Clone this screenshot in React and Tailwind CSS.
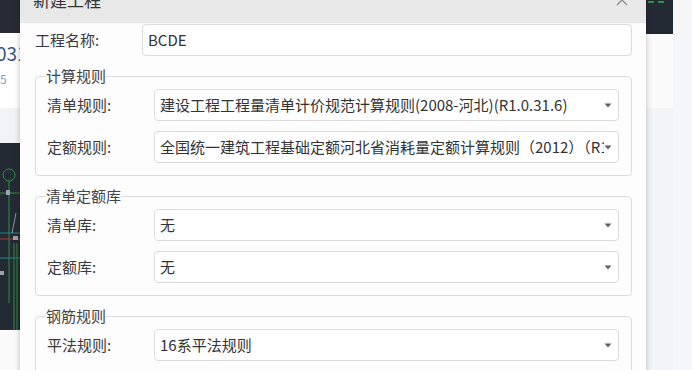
import React from 'react';

const font = { fontFamily: '"Noto Sans CJK SC", "Noto Sans", sans-serif' };

// Small filled caret used by the select boxes
const Caret = () => (
  <svg width="8" height="5" viewBox="0 0 8 5" className="shrink-0">
    <path d="M0.5 0.5 L7.5 0.5 L4 4.5 Z" fill="#606266" />
  </svg>
);

const SelectBox = ({ value }) => (
  <div className="flex-1 min-w-0 h-[32px] flex items-center border border-[#dcdcdc] rounded-[4px] bg-white pl-[5px] pr-[6px]">
    <div className="flex-1 min-w-0 overflow-hidden whitespace-nowrap text-[15px] leading-[20px] text-[#333]">
      {value}
    </div>
    <Caret />
  </div>
);

const Row = ({ label, value }) => (
  <div className="flex items-center min-w-0">
    <div className="w-[107px] shrink-0 text-[15px] leading-[20px] text-[#3a3a3a]">{label}</div>
    <SelectBox value={value} />
  </div>
);

const Group = ({ title, rows }) => (
  <fieldset className="mt-[11px] min-w-0 border border-[#dcdcdc] rounded-[4px] pl-[11px] pr-[12px] pt-[4px] pb-[12px]">
    <legend className="px-0 ml-[-1px] text-[15px] leading-[18px] text-[#444]">{title}</legend>
    <div className="flex flex-col gap-[10px] min-w-0">
      {rows.map((r) => (
        <Row key={r.label} label={r.label} value={r.value} />
      ))}
    </div>
  </fieldset>
);

// Dark drawing canvas peeking out on the left side
const CanvasStrip = () => (
  <svg width="20" height="187" viewBox="0 0 20 187" className="block">
    <rect width="20" height="187" fill="#242a33" />
    <circle cx="9" cy="32" r="6" fill="none" stroke="#2f8f3f" strokeWidth="1" />
    <line x1="9" y1="38" x2="9" y2="160" stroke="#2f8f3f" strokeWidth="1" />
    <line x1="0" y1="50" x2="20" y2="50" stroke="#2f8f3f" strokeWidth="1" />
    <rect x="6" y="47" width="4" height="5" fill="#9aa3ad" />
    <line x1="0" y1="90" x2="20" y2="90" stroke="#1f8a8a" strokeWidth="1" />
    <line x1="0" y1="96" x2="20" y2="96" stroke="#a33a3a" strokeWidth="1" />
    <line x1="16" y1="70" x2="12" y2="90" stroke="#8a93a0" strokeWidth="1" />
    <rect x="13" y="93" width="5" height="4" fill="#9aa3ad" />
    <line x1="14" y1="100" x2="14" y2="187" stroke="#2f8f3f" strokeWidth="1" />
    <line x1="17" y1="100" x2="17" y2="187" stroke="#2f8f3f" strokeWidth="1" />
    <line x1="0" y1="115" x2="20" y2="115" stroke="#1f8a8a" strokeWidth="1" />
    <rect x="0" y="128" width="4" height="4" fill="#9aa3ad" />
  </svg>
);

export default function App() {
  return (
    <div className="relative w-[692px] h-[370px] overflow-hidden bg-[#f5f6f8]" style={font}>
      {/* page behind the dialog */}
      <div className="flex h-full">
        <div className="w-[20px] flex flex-col overflow-hidden">
          <div className="h-[33px] bg-[#262b35]" />
          <div className="h-[75px] bg-white relative">
            <div className="ml-[-4px] mt-[8px] text-[19px] leading-[24px] text-[#3a5378] whitespace-nowrap">031</div>
            <div className="mt-[6px] text-[12px] leading-[16px] text-[#8d9bb0]">5</div>
          </div>
          <div className="h-[35px] bg-[#f2f3f5]" />
          <CanvasStrip />
          <div className="flex-1 bg-[#fafafa]" />
        </div>
        <div className="flex-1" />
        <div className="w-[46px] flex">
          <div className="w-[27px] flex flex-col">
            <div className="h-[34px] bg-[#242a33] flex gap-[4px] pt-[1px] pl-[2px]">
              <div className="w-[6px] h-[2px] bg-[#2f8f3f]" />
              <div className="w-[6px] h-[2px] bg-[#2f8f3f]" />
            </div>
            <div className="h-[74px] bg-[#fbfbfb]" />
            <div className="flex-1 bg-[#f3f4f6]" />
          </div>
          <div className="flex-1 bg-[#f6f7f9]" />
        </div>
      </div>

      {/* modal dialog */}
      <div className="absolute left-[20px] top-[-15px] w-[626px] h-[400px] bg-[#fdfdfd] shadow-[0_0_6px_rgba(0,0,0,0.25)]">
        <div className="h-[38px] bg-[#e7e8e7] flex items-center justify-between pb-[9px] pl-[13px] pr-[18px]">
          <div className="text-[17px] leading-[22px] text-[#333]">新建工程</div>
          <svg width="12" height="12" viewBox="0 0 12 12">
            <path d="M1 1 L11 11 M11 1 L1 11" stroke="#8a8a8a" strokeWidth="1.3" />
          </svg>
        </div>
        <div className="pl-[15px] pr-[14px] pt-[1px]">
          <div className="flex items-center">
            <div className="w-[107px] shrink-0 text-[15px] leading-[20px] text-[#3a3a3a]">工程名称:</div>
            <div className="flex-1 h-[32px] flex items-center border border-[#dcdcdc] rounded-[4px] bg-white px-[5px] text-[15px] text-[#333]">
              BCDE
            </div>
          </div>
          <Group
            title="计算规则"
            rows={[
              { label: '清单规则:', value: '建设工程工程量清单计价规范计算规则(2008-河北)(R1.0.31.6)' },
              { label: '定额规则:', value: '全国统一建筑工程基础定额河北省消耗量定额计算规则（2012）（R1.0.31.6）' },
            ]}
          />
          <Group
            title="清单定额库"
            rows={[
              { label: '清单库:', value: '无' },
              { label: '定额库:', value: '无' },
            ]}
          />
          <Group
            title="钢筋规则"
            rows={[{ label: '平法规则:', value: '16系平法规则' }]}
          />
        </div>
      </div>
    </div>
  );
}
